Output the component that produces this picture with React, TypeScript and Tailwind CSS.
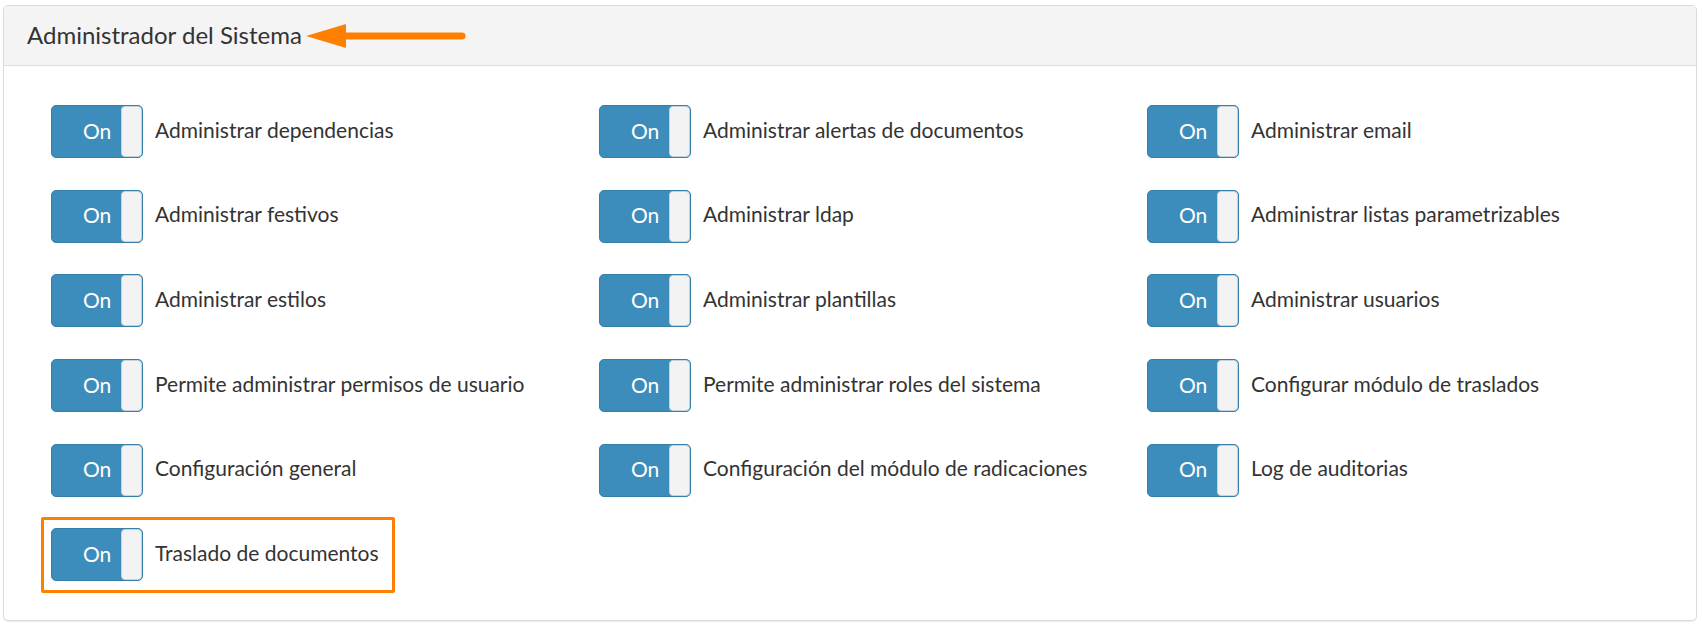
import type { FC } from 'react'

const items = [
  'Administrar dependencias',
  'Administrar alertas de documentos',
  'Administrar email',
  'Administrar festivos',
  'Administrar ldap',
  'Administrar listas parametrizables',
  'Administrar estilos',
  'Administrar plantillas',
  'Administrar usuarios',
  'Permite administrar permisos de usuario',
  'Permite administrar roles del sistema',
  'Configurar módulo de traslados',
  'Configuración general',
  'Configuración del módulo de radicaciones',
  'Log de auditorias',
  'Traslado de documentos',
]

// interruptor estilo bootstrap-switch
const Toggle: FC = () => (
  <div className="flex h-[53px] w-[92px] shrink-0 overflow-hidden rounded-[5px] border border-[#367fa9] bg-[#3c8dbc]">
    <div className="flex flex-1 items-center pb-[3px] pl-[31px] text-[21px] leading-none text-white">On</div>
    <div className="w-[21px] rounded-[4px] border border-[#c5d3de] bg-[#f3f3f3]" />
  </div>
)

const Arrow: FC = () => (
  <svg width="160" height="26" viewBox="0 0 160 26" className="ml-[4px]">
    <polygon points="0,13 40,1 40,25" fill="#ff8000" />
    <line x1="38" y1="13" x2="156" y2="13" stroke="#ff8000" strokeWidth="7" strokeLinecap="round" />
  </svg>
)

export default function App() {
  return (
    <div className="min-h-[624px] bg-white pl-[3px] pr-[6px] pt-[5px] font-['Lato','Noto_Sans',sans-serif] text-[#333]">
      <div className="overflow-hidden rounded-[5px] border border-[#dadada] bg-white shadow-[0_1px_1px_rgba(0,0,0,0.08)]">
        {/* cabecera */}
        <div className="flex h-[60px] items-center border-b border-[#dedede] bg-[#f4f4f4] pl-[23px]">
          <span className="pb-[2px] text-[24px] leading-none">Administrador del Sistema</span>
          <Arrow />
        </div>

        {/* permisos */}
        <div className="grid grid-cols-[repeat(3,548px)] gap-y-[31.7px] pb-[39px] pl-[47px] pt-[39px]">
          {items.map((label, i) => (
            <div key={label} className="relative flex h-[53px] items-center">
              <Toggle />
              <span className="ml-[12px] pb-[5px] text-[21px] leading-none">{label}</span>
              {i === items.length - 1 && (
                <div className="pointer-events-none absolute -left-[10px] -top-[11px] h-[76px] w-[354px] rounded-[2px] border-[3px] border-[#ff8000]" />
              )}
            </div>
          ))}
        </div>
      </div>
    </div>
  )
}
